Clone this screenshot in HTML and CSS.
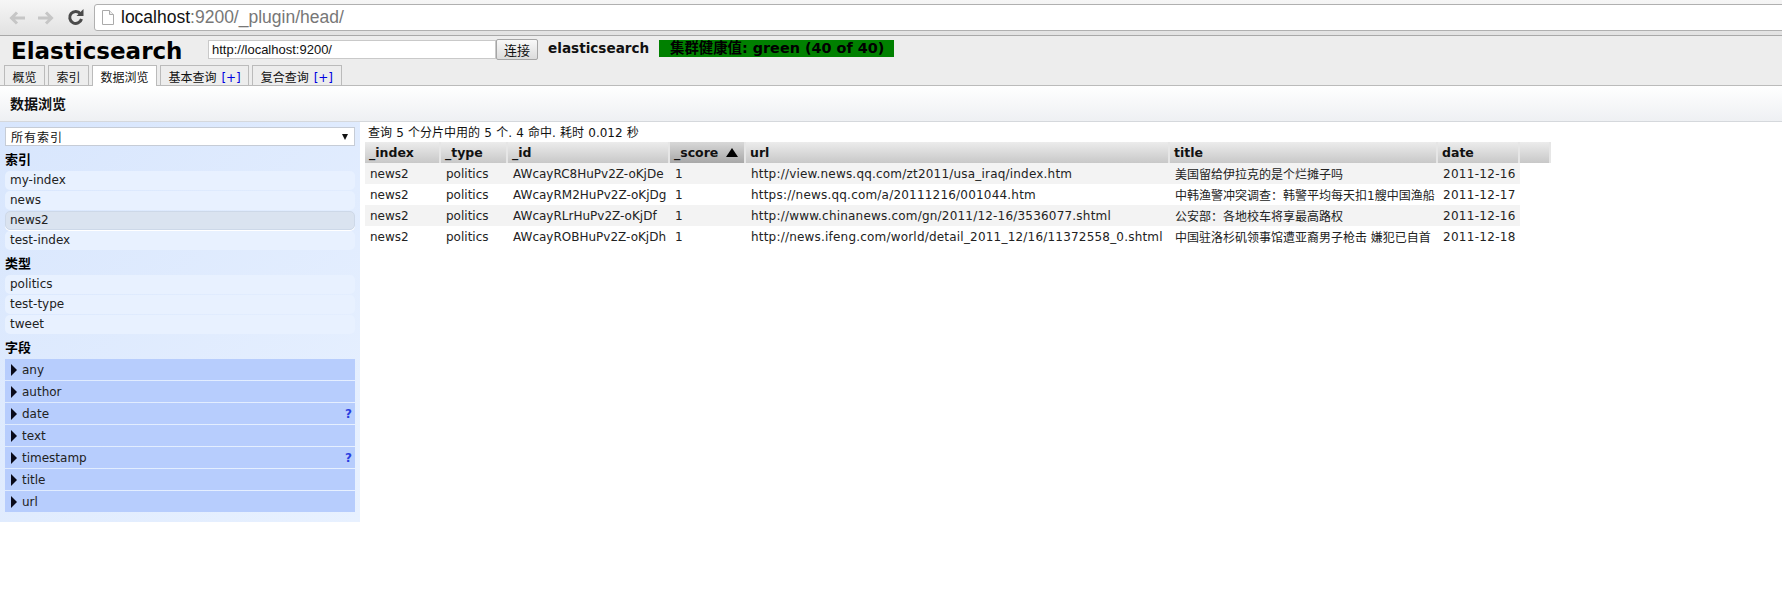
FILE: index.html
```html
<!DOCTYPE html>
<html lang="zh">
<head>
<meta charset="utf-8">
<title>Elasticsearch</title>
<link rel="stylesheet" href="styles.css">
</head>
<body>
<div class="chrome">
  <svg class="nav" width="16" height="16" viewBox="0 0 16 16"><path d="M8 2.500 2.500 8 8 13.500M3 8h13" fill="none" stroke="#c6c6c6" stroke-width="3"/></svg>
  <svg class="nav" width="16" height="16" viewBox="0 0 16 16"><path d="M8 2.500 13.500 8 8 13.500M13 8H0" fill="none" stroke="#c6c6c6" stroke-width="3"/></svg>
  <svg class="nav reload" width="17" height="17" viewBox="0 0 17 17"><path d="M13.500 4.800A6 6 0 1 0 14.500 10" fill="none" stroke="#4a4a4a" stroke-width="3"/><path d="M9.500 7H16.500V0z" fill="#4a4a4a"/></svg>
  <div class="address">
    <svg class="page-icon" width="12" height="15" viewBox="0 0 12 15"><path d="M.5.5h7l4 4v10H.5z" fill="#fff" stroke="#aaa"/><path d="M7.500.5v4h4" fill="#eee" stroke="#aaa"/></svg>
    <span class="host">localhost</span><span class="path">:9200/_plugin/head/</span>
  </div>
</div>
<div class="header">
  <div class="header-top">
    <span class="brand">Elasticsearch</span>
    <input class="cluster-url" value="http://localhost:9200/">
    <button class="connect">连接</button>
    <span class="cluster-name">elasticsearch</span>
    <span class="health">集群健康值: green (40 of 40)</span>
  </div>
  <div class="tabs">
    <span class="tab">概览</span>
    <span class="tab">索引</span>
    <span class="tab active">数据浏览</span>
    <span class="tab">基本查询 <b class="plus">[+]</b></span>
    <span class="tab">复合查询 <b class="plus">[+]</b></span>
  </div>
</div>
<div class="toolbar">数据浏览</div>
<div class="main">
  <aside class="side">
    <div class="select"><span>所有索引</span><i class="select-arrow"></i></div>
    <h3 class="side-title">索引</h3>
    <div class="item">my-index</div>
    <div class="item">news</div>
    <div class="item selected">news2</div>
    <div class="item">test-index</div>
    <h3 class="side-title">类型</h3>
    <div class="item">politics</div>
    <div class="item">test-type</div>
    <div class="item">tweet</div>
    <h3 class="side-title">字段</h3>
    <div class="field"><i class="tri"></i>any</div>
    <div class="field"><i class="tri"></i>author</div>
    <div class="field"><i class="tri"></i>date<b class="help">?</b></div>
    <div class="field"><i class="tri"></i>text</div>
    <div class="field"><i class="tri"></i>timestamp<b class="help">?</b></div>
    <div class="field"><i class="tri"></i>title</div>
    <div class="field"><i class="tri"></i>url</div>
  </aside>
  <section class="results">
    <div class="summary">查询 5 个分片中用的 5 个. 4 命中. 耗时 0.012 秒</div>
    <table class="grid">
      <colgroup>
        <col class="c-index"><col class="c-type"><col class="c-id"><col class="c-score"><col class="c-url"><col class="c-title"><col class="c-date"><col class="c-end">
      </colgroup>
      <thead>
        <tr>
          <th>_index</th><th>_type</th><th>_id</th><th class="sorted">_score<i class="up"></i></th><th>url</th><th>title</th><th>date</th><th></th>
        </tr>
      </thead>
      <tbody>
        <tr><td>news2</td><td>politics</td><td>AWcayRC8HuPv2Z-oKjDe</td><td>1</td><td class="url">http://view.news.qq.com/zt2011/usa_iraq/index.htm</td><td>美国留给伊拉克的是个烂摊子吗</td><td class="date">2011-12-16</td></tr>
        <tr><td>news2</td><td>politics</td><td>AWcayRM2HuPv2Z-oKjDg</td><td>1</td><td class="url">https://news.qq.com/a/20111216/001044.htm</td><td>中韩渔警冲突调查：韩警平均每天扣1艘中国渔船</td><td class="date">2011-12-17</td></tr>
        <tr><td>news2</td><td>politics</td><td>AWcayRLrHuPv2Z-oKjDf</td><td>1</td><td class="url">http://www.chinanews.com/gn/2011/12-16/3536077.shtml</td><td>公安部：各地校车将享最高路权</td><td class="date">2011-12-16</td></tr>
        <tr><td>news2</td><td>politics</td><td>AWcayROBHuPv2Z-oKjDh</td><td>1</td><td class="url">http://news.ifeng.com/world/detail_2011_12/16/11372558_0.shtml</td><td>中国驻洛杉矶领事馆遭亚裔男子枪击 嫌犯已自首</td><td class="date">2011-12-18</td></tr>
      </tbody>
    </table>
  </section>
</div>
</body>
</html>
```
FILE: styles.css
```css
* { box-sizing: border-box; }
html, body { margin: 0; padding: 0; background: #fff; }
body {
  height: 609px;
  overflow: hidden;
  font: 12px "DejaVu Sans", "Noto Sans CJK SC", sans-serif;
  color: #111;
}
.chrome {
  height: 36px;
  display: flex;
  align-items: center;
  padding-left: 9px;
  gap: 13px;
  background: linear-gradient(#f6f6f6, #e2e2e2);
  border-bottom: 1px solid #a9a9a9;
}
.nav { flex: none; }
.reload { margin-right: -3px; }
.address {
  flex: 1;
  height: 27px;
  margin-right: -2px;
  display: flex;
  align-items: center;
  padding-left: 7px;
  background: #fff;
  border: 1px solid #b0b0b0;
  border-radius: 3px 0 0 3px;
  font: 17.5px "Liberation Sans", sans-serif;
}
.page-icon { margin-right: 7px; }
.host { color: #111; }
.path { color: #777; }
.header {
  height: 50px;
  background: #ededed;
  border-bottom: 1px solid #bbb;
}
.header-top {
  height: 29px;
  display: flex;
  align-items: flex-start;
  padding-left: 11px;
}
.brand {
  font: bold 23px/30px "DejaVu Sans", sans-serif;
  color: #000;
  width: 197px;
  flex: none;
}
.cluster-url {
  width: 288px;
  height: 19px;
  margin: 4px 0 0;
  padding: 0 3px;
  border: 1px solid #c9c9c9;
  background: #fff;
  font: 13px "Liberation Sans", sans-serif;
  color: #111;
}
.connect {
  width: 42px;
  height: 21px;
  margin: 3px 0 0;
  padding: 0;
  background: linear-gradient(#f8f8f8, #dcdcdc);
  border: 1px solid #a5a5a5;
  border-radius: 2px;
  font: 13px "Noto Sans CJK SC", sans-serif;
  color: #111;
}
.cluster-name {
  margin: 0 11px 0 10px;
  width: 100px;
  font: bold 13.6px/25px "DejaVu Sans", sans-serif;
  color: #111;
  white-space: nowrap;
}
.health {
  width: 235px;
  height: 17px;
  margin-top: 4px;
  padding-left: 11px;
  background: #008000;
  font: bold 14.4px/17px "DejaVu Sans", "Noto Sans CJK SC", sans-serif;
  color: #000;
  white-space: nowrap;
  overflow: hidden;
}
.tabs {
  height: 20px;
  display: flex;
  align-items: flex-start;
  gap: 3px;
  padding-left: 4px;
}
.tab {
  height: 20px;
  padding: 3px 7.5px 0;
  background: #ededed;
  border: 1px solid #bbb;
  border-bottom: 0;
  line-height: 18px;
  white-space: nowrap;
}
.tab.active { background: #fff; height: 21px; position: relative; }
.plus { font-weight: normal; color: #0000e0; margin-left: 1px; }
.toolbar {
  height: 36px;
  padding-left: 10px;
  background: linear-gradient(#fff, #eef0f3);
  border-bottom: 1px solid #d5d8dc;
  font: bold 14px/35px "Noto Sans CJK SC", sans-serif;
  color: #111;
}
.main { display: flex; align-items: flex-start; }
.side {
  width: 360px;
  flex: none;
  padding: 5px 5px 10px;
  background: linear-gradient(135deg, #d8e6fd, #e8f1ff);
}
.select {
  height: 19px;
  display: flex;
  align-items: center;
  justify-content: space-between;
  padding: 0 6px 0 5px;
  background: #fff;
  border: 1px solid #c6ccd6;
  letter-spacing: 1px;
}
.select-arrow {
  border: 3px solid transparent;
  border-top: 6px solid #111;
  border-bottom: 0;
}
.side-title {
  margin: 0;
  height: 25px;
  font: bold 13px/25px "Noto Sans CJK SC", sans-serif;
  color: #000;
}
.item {
  height: 19px;
  padding-left: 5px;
  line-height: 19px;
  background: #e8f1ff;
  border-radius: 5px;
  color: #222;
}
.item + .item { margin-top: 1px; }
.item.selected {
  background: #dae3f0;
  border: 1px solid #cdd8e8;
  padding-left: 4px;
  line-height: 17px;
  box-shadow: 0 1px 0 #fff;
}
.field {
  height: 21px;
  display: flex;
  align-items: center;
  background: #b7cdfd;
  padding-left: 6px;
  color: #222;
}
.field + .field { margin-top: 1px; }
.tri {
  margin-right: 5px;
  border: 6px solid transparent;
  border-left: 6px solid #0a0a1a;
  border-right: 0;
}
.help {
  margin-left: auto;
  margin-right: 3px;
  color: #2a3fe0;
}
.results { flex: 1; padding: 3px 0 0 5px; }
.summary { height: 17px; line-height: 17px; padding-left: 3px; white-space: nowrap; word-spacing: 0.4px; color: #111; }
.grid { border-collapse: separate; border-spacing: 0; table-layout: fixed; width: 1186px; }
.c-index { width: 76px; }
.c-type { width: 67px; }
.c-id { width: 162px; }
.c-score { width: 76px; }
.c-url { width: 424px; }
.c-title { width: 268px; }
.c-date { width: 82px; }
.c-end { width: 31px; }
.grid th {
  height: 21px;
  padding: 0 4px;
  text-align: left;
  font-size: 12.5px;
  font-weight: bold;
  background: linear-gradient(#ececec, #c8c8c8);
  border-right: 2px solid #e6e6e6;
  color: #111;
  white-space: nowrap;
}
.grid th.sorted { background: linear-gradient(#d8d8d8, #a8a8a8); position: relative; }
.up {
  position: absolute;
  right: 6px;
  top: 6px;
  border: 6px solid transparent;
  border-bottom: 9px solid #000;
  border-top: 0;
}
.grid td {
  height: 21px;
  padding: 0 4px 0 5px;
  white-space: nowrap;
  overflow: hidden;
  color: #222;
}
.grid td.url { letter-spacing: 0.2px; }
.grid td.date { letter-spacing: 0.3px; }
.grid tbody tr:nth-child(odd) td { background: #f3f3f3; }
```
